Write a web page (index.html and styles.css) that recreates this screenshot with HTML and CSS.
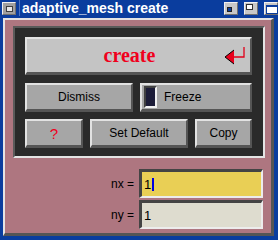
FILE: index.html
```html
<!DOCTYPE html>
<html>
<head>
<meta charset="utf-8">
<link rel="stylesheet" href="styles.css">
</head>
<body>
<div class="win">
  <div class="titlebar">
    <div class="tbtn menu"><span class="menu-glyph"></span></div>
    <div class="title">adaptive_mesh create</div>
    <div class="tbtn"><span class="min-glyph"></span></div>
    <div class="tbtn"><span class="max-glyph"></span></div>
    <div class="tbtn"><span class="rest-glyph"></span></div>
  </div>
  <div class="frame">
    <div class="panel">
      <div class="btn create">
        <span class="create-label">create</span>
        <svg class="ret" width="22" height="20" viewBox="0 0 22 20">
          <polyline points="10,11 20,11 20,1" fill="none" stroke="#e0001a" stroke-width="1.3"/>
          <polygon points="1,11 10,4 10,18" fill="#e8001c"/>
          <polyline points="10,4 1,11 10,18" fill="none" stroke="#000" stroke-width="1"/>
        </svg>
      </div>
      <div class="row">
        <div class="btn dismiss">Dismiss</div>
        <div class="btn freeze"><span class="check"></span><span class="freeze-label">Freeze</span></div>
      </div>
      <div class="row">
        <div class="btn help">?</div>
        <div class="btn setdef">Set Default</div>
        <div class="btn copy">Copy</div>
      </div>
    </div>
    <div class="fields">
      <label class="lbl">nx =</label>
      <div class="field active">1<span class="cursor"></span></div>
      <label class="lbl">ny =</label>
      <div class="field">1</div>
    </div>
  </div>
</div>
</body>
</html>
```

FILE: styles.css
```css
html, body {
  margin: 0;
  padding: 0;
  background: #0a3d9e;
}
.win {
  width: 278px;
  height: 240px;
  background: #0a3d9e;
  font-family: "Liberation Sans", Arial, sans-serif;
  display: flex;
  flex-direction: column;
}
.titlebar {
  height: 18px;
  display: flex;
  align-items: flex-start;
  padding: 2px 0 0 2px;
  box-sizing: border-box;
}
.tbtn {
  width: 14px;
  height: 13px;
  box-sizing: border-box;
  background: #c8c8c8;
  border-top: 1px solid #f0f0f0;
  border-left: 1px solid #f0f0f0;
  border-bottom: 1px solid #707070;
  border-right: 1px solid #707070;
  position: relative;
  margin-left: 6px;
}
.tbtn.menu {
  margin-left: 0;
  background: #a0a0a0;
}
.menu-glyph {
  position: absolute;
  left: 3px;
  top: 3px;
  width: 5px;
  height: 4px;
  background: #e8e8e8;
  border: 1px solid #404040;
}
.min-glyph {
  position: absolute;
  left: 2px;
  bottom: 2px;
  width: 3px;
  height: 3px;
  background: #0a3d9e;
  border: 1px solid #202020;
}
.max-glyph {
  position: absolute;
  left: 1px;
  top: 1px;
  width: 5px;
  height: 4px;
  background: #ffffff;
  border: 1px solid #303030;
}
.rest-glyph {
  position: absolute;
  left: 1px;
  top: 2px;
  width: 10px;
  height: 6px;
  background: #ffffff;
  border: 1px solid #0a3d9e;
  border-top-width: 2px;
}
.title {
  flex: 1;
  color: #ffffff;
  font-weight: bold;
  font-size: 14px;
  line-height: 14px;
  padding-left: 2px;
  border-left: 1px solid #4d74c0;
  margin-left: 3px;
  height: 15px;
  margin-top: -2px;
  padding-top: 1px;
  white-space: nowrap;
}
.frame {
  margin: 0 4px 4px 3px;
  flex: 1;
  background: #ae7680;
  border-top: 2px solid #e4e4e4;
  border-left: 2px solid #e4e4e4;
  border-bottom: 3px solid #555555;
  border-right: 3px solid #555555;
  padding: 6px 6px 0 8px;
  display: flex;
  flex-direction: column;
}
.panel {
  width: 252px;
  box-sizing: border-box;
  background: #2a2a2a;
  border-top: 2px solid #5a5a5a;
  border-left: 2px solid #5a5a5a;
  border-bottom: 2px solid #e4e4e4;
  border-right: 2px solid #e4e4e4;
  padding: 9px 11px 8px 10px;
  display: flex;
  flex-direction: column;
  gap: 8px;
}
.row {
  display: flex;
  gap: 7px;
}
.row + .row {
  margin-top: -1px;
}
.btn {
  box-sizing: border-box;
  height: 29px;
  background: #a6a6a6;
  border-top: 2px solid #e2e2e2;
  border-left: 2px solid #e2e2e2;
  border-bottom: 3px solid #555555;
  border-right: 2px solid #555555;
  display: flex;
  align-items: center;
  justify-content: center;
  font-size: 12px;
  color: #000;
}
.create {
  height: 38px;
  background: #c4c4c4;
  position: relative;
}
.create-label {
  font-family: "Liberation Serif", "Times New Roman", serif;
  font-weight: bold;
  font-size: 20px;
  color: #f0001c;
  margin-right: 18px;
}
.ret {
  position: absolute;
  right: 4px;
  top: 7px;
}
.dismiss { width: 108px; }
.freeze {
  width: 112px;
  justify-content: flex-start;
  padding-left: 2px;
}
.check {
  width: 13px;
  height: 22px;
  box-sizing: border-box;
  background: #1c1c38;
  border-top: 2px solid #404040;
  border-left: 2px solid #404040;
  border-bottom: 2px solid #f0f0f0;
  border-right: 2px solid #f0f0f0;
  margin-top: -1px;
}
.freeze-label {
  margin-left: 7px;
}
.help {
  width: 58px;
  color: #f0001c;
  font-size: 15px;
}
.setdef { width: 98px; }
.copy { width: 57px; }
.fields {
  margin-top: 11px;
  display: grid;
  grid-template-columns: 126px 124px;
  row-gap: 2px;
  align-items: center;
}
.lbl {
  text-align: right;
  padding-right: 5px;
  font-size: 12px;
  color: #000;
}
.field {
  box-sizing: border-box;
  height: 29px;
  background: #dedccf;
  border-top: 3px solid #444444;
  border-left: 3px solid #444444;
  border-bottom: 2px solid #ececec;
  border-right: 2px solid #ececec;
  font-size: 13px;
  padding-left: 2px;
  display: flex;
  align-items: center;
}
.field.active {
  background: #e9cf55;
}
.cursor {
  display: inline-block;
  width: 2px;
  height: 13px;
  background: #0000e0;
  margin-left: 1px;
}
```
